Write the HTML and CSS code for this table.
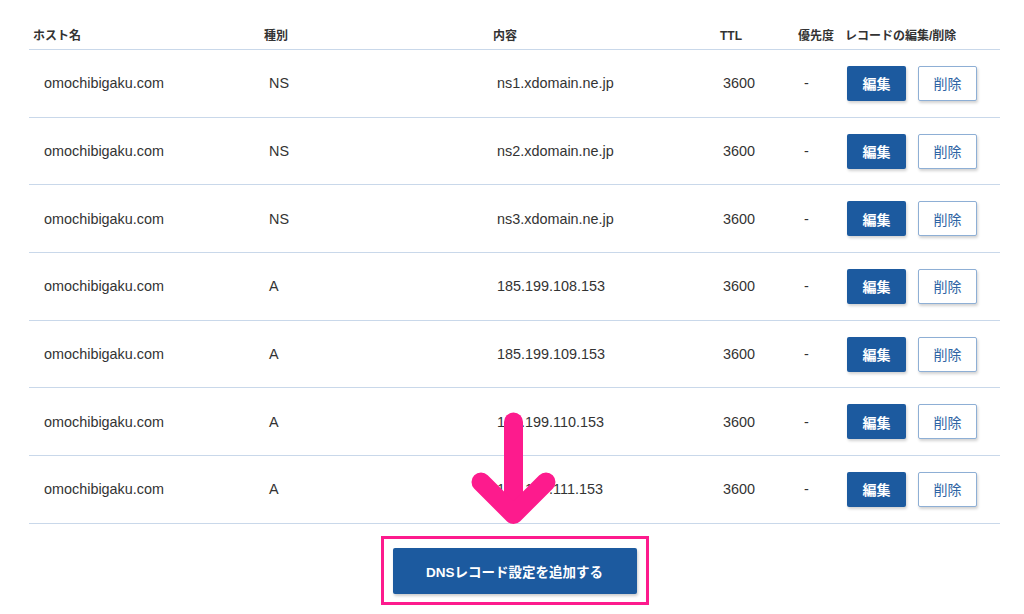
FILE: index.html
```html
<!DOCTYPE html>
<html lang="ja">
<head>
    <meta charset="UTF-8">
    <meta name="viewport" content="width=device-width, initial-scale=1.0">
    <title>DNSレコード設定</title>
    <link rel="stylesheet" href="styles.css">
</head>
<body>
    <div class="page">
        <div class="records">
            <div class="row head">
                <div class="c-host">ホスト名</div>
                <div class="c-type">種別</div>
                <div class="c-content">内容</div>
                <div class="c-ttl">TTL</div>
                <div class="c-prio">優先度</div>
                <div class="c-act">レコードの編集/削除</div>
            </div>
            <div class="row">
                <div class="c-host">omochibigaku.com</div>
                <div class="c-type">NS</div>
                <div class="c-content">ns1.xdomain.ne.jp</div>
                <div class="c-ttl">3600</div>
                <div class="c-prio">-</div>
                <div class="c-act"><button class="btn-edit">編集</button><button class="btn-del">削除</button></div>
            </div>
            <div class="row">
                <div class="c-host">omochibigaku.com</div>
                <div class="c-type">NS</div>
                <div class="c-content">ns2.xdomain.ne.jp</div>
                <div class="c-ttl">3600</div>
                <div class="c-prio">-</div>
                <div class="c-act"><button class="btn-edit">編集</button><button class="btn-del">削除</button></div>
            </div>
            <div class="row">
                <div class="c-host">omochibigaku.com</div>
                <div class="c-type">NS</div>
                <div class="c-content">ns3.xdomain.ne.jp</div>
                <div class="c-ttl">3600</div>
                <div class="c-prio">-</div>
                <div class="c-act"><button class="btn-edit">編集</button><button class="btn-del">削除</button></div>
            </div>
            <div class="row">
                <div class="c-host">omochibigaku.com</div>
                <div class="c-type">A</div>
                <div class="c-content">185.199.108.153</div>
                <div class="c-ttl">3600</div>
                <div class="c-prio">-</div>
                <div class="c-act"><button class="btn-edit">編集</button><button class="btn-del">削除</button></div>
            </div>
            <div class="row">
                <div class="c-host">omochibigaku.com</div>
                <div class="c-type">A</div>
                <div class="c-content">185.199.109.153</div>
                <div class="c-ttl">3600</div>
                <div class="c-prio">-</div>
                <div class="c-act"><button class="btn-edit">編集</button><button class="btn-del">削除</button></div>
            </div>
            <div class="row">
                <div class="c-host">omochibigaku.com</div>
                <div class="c-type">A</div>
                <div class="c-content">185.199.110.153</div>
                <div class="c-ttl">3600</div>
                <div class="c-prio">-</div>
                <div class="c-act"><button class="btn-edit">編集</button><button class="btn-del">削除</button></div>
            </div>
            <div class="row">
                <div class="c-host">omochibigaku.com</div>
                <div class="c-type">A</div>
                <div class="c-content">185.199.111.153</div>
                <div class="c-ttl">3600</div>
                <div class="c-prio">-</div>
                <div class="c-act"><button class="btn-edit">編集</button><button class="btn-del">削除</button></div>
            </div>
        </div>

        <div class="add-area">
            <div class="highlight">
                <button class="btn-add">DNSレコード設定を追加する</button>
            </div>
        </div>

        <!-- annotation arrow pointing at the add button -->
        <svg class="arrow" width="110" height="130" viewBox="0 0 110 130">
            <g fill="none" stroke="#fd1b8d" stroke-width="19" stroke-linecap="round" stroke-linejoin="round">
                <line x1="53.5" y1="22" x2="53.5" y2="113"/>
                <polyline points="21,82 53.5,114.5 86,82"/>
            </g>
        </svg>
    </div>
</body>
</html>
```

FILE: styles.css
```css
body {
    margin: 0;
    background: #fff;
    font-family: "Liberation Sans", "Noto Sans CJK JP", sans-serif;
    color: #333;
}

.page {
    position: relative;
    width: 1024px;
    height: 614px;
}

.records {
    margin-left: 29px;
    width: 971px;
}

.row {
    display: grid;
    grid-template-columns: 235px 229px 227px 78px 47px 1fr;
    align-items: center;
    height: 66.7px;
    border-bottom: 1px solid #c9d8ea;
    font-size: 14.4px;
}

.row.head {
    align-items: end;
    padding-bottom: 6px;
    box-sizing: border-box;
    height: 50px;
    font-size: 12px;
    font-weight: bold;
    color: #333;
}

.row .c-host { padding-left: 15px; }
.row .c-type { padding-left: 5px; }
.row .c-content { padding-left: 4px; }
.row .c-ttl { padding-left: 3px; }
.row .c-prio { padding-left: 6px; }
.row .c-act {
    display: flex;
    gap: 12px;
    padding-left: 2px;
}

.row.head .c-host { padding-left: 4px; }
.row.head .c-type,
.row.head .c-content,
.row.head .c-ttl,
.row.head .c-prio,
.row.head .c-act { padding-left: 0; }

.btn-edit,
.btn-del {
    width: 59px;
    height: 35px;
    border-radius: 2px;
    font-family: inherit;
    font-size: 14px;
    cursor: pointer;
    box-shadow: 1px 2px 3px rgba(0, 0, 0, 0.18);
}

.btn-edit {
    background: #1c5a9f;
    border: none;
    color: #fff;
    font-weight: bold;
}

.btn-del {
    background: #fff;
    border: 1px solid #8eafd5;
    color: #2f64a4;
}

.add-area {
    display: flex;
    justify-content: center;
    margin-left: 29px;
    width: 971px;
    padding-top: 12px;
}

.highlight {
    border: 3px solid #fd1b8d;
    padding: 9px 9px 8px;
}

.btn-add {
    display: block;
    width: 244px;
    height: 46px;
    background: #1c5a9f;
    border: none;
    border-radius: 2px;
    color: #fff;
    font-family: inherit;
    font-size: 13.5px;
    font-weight: bold;
    box-shadow: 1px 2px 3px rgba(0, 0, 0, 0.2);
    cursor: pointer;
}

.arrow {
    position: absolute;
    left: 460px;
    top: 400px;
}
```
